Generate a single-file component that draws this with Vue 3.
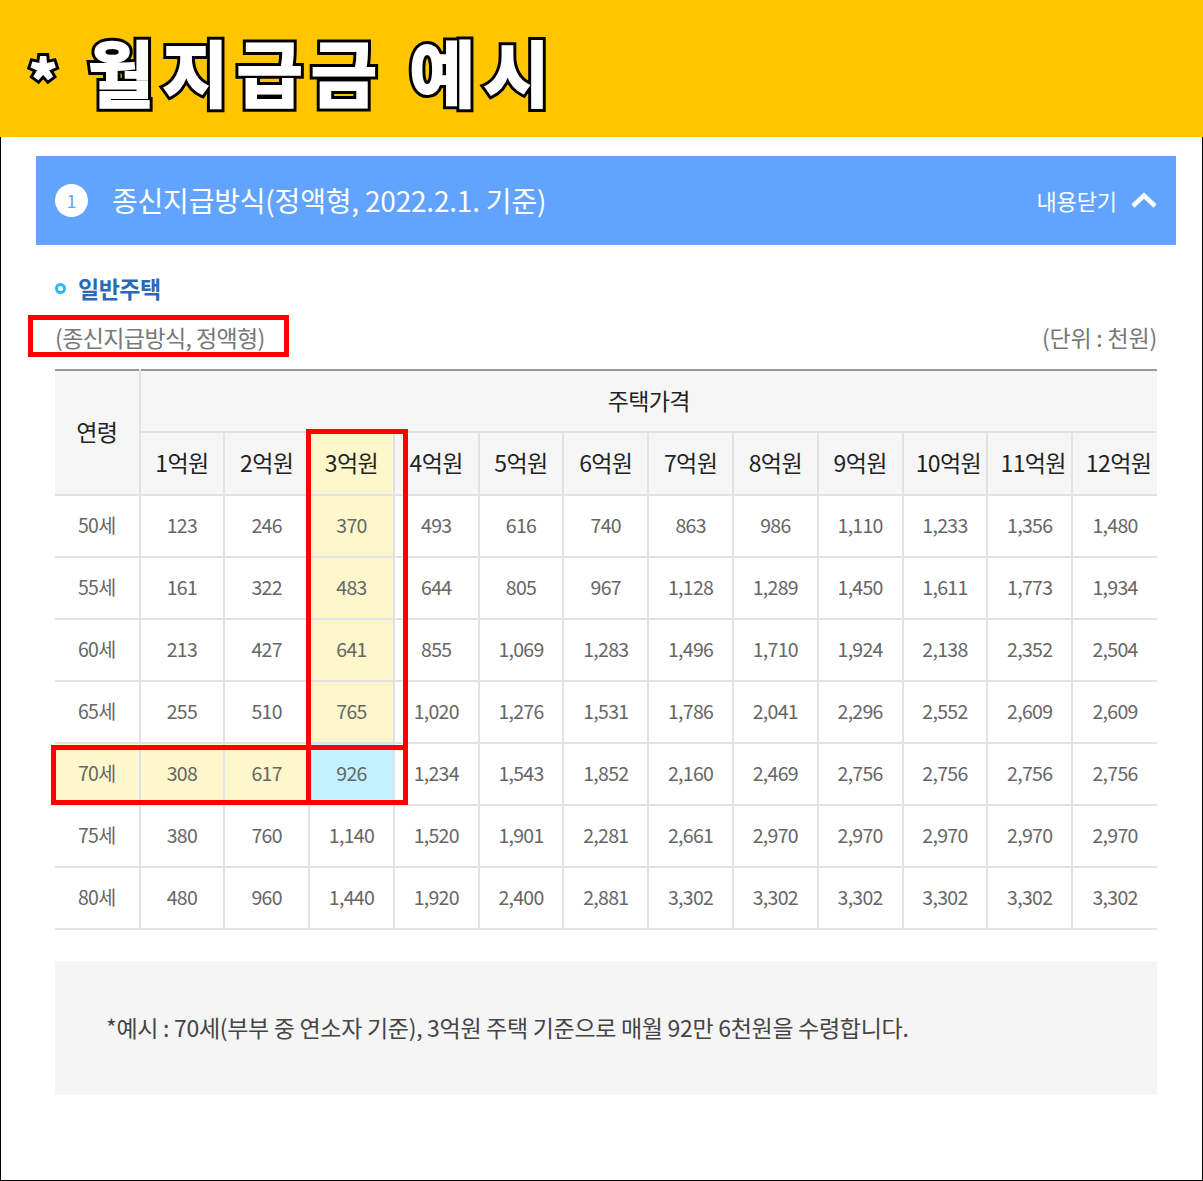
<script setup>
const title = '월지급금 예시'
const prices = ['1억원','2억원','3억원','4억원','5억원','6억원','7억원','8억원','9억원','10억원','11억원','12억원']
const rows = [
  ['50세','123','246','370','493','616','740','863','986','1,110','1,233','1,356','1,480'],
  ['55세','161','322','483','644','805','967','1,128','1,289','1,450','1,611','1,773','1,934'],
  ['60세','213','427','641','855','1,069','1,283','1,496','1,710','1,924','2,138','2,352','2,504'],
  ['65세','255','510','765','1,020','1,276','1,531','1,786','2,041','2,296','2,552','2,609','2,609'],
  ['70세','308','617','926','1,234','1,543','1,852','2,160','2,469','2,756','2,756','2,756','2,756'],
  ['75세','380','760','1,140','1,520','1,901','2,281','2,661','2,970','2,970','2,970','2,970','2,970'],
  ['80세','480','960','1,440','1,920','2,400','2,881','3,302','3,302','3,302','3,302','3,302','3,302']
]
function cellClass(r, c) {
  if (r === 4 && c === 3) return 'blue'
  if ((r === 4 && c < 3) || (r < 4 && c === 3)) return 'yellow'
  return ''
}
</script>

<template>
  <div class="page">
    <header class="banner">
      <span class="star" data-text="*">*</span>
      <h1 :data-text="title">{{ title }}</h1>
    </header>
    <main class="sheet">
      <section class="bar">
        <div class="bar-left">
          <span class="num">1</span>
          <h2>종신지급방식(정액형, 2022.2.1. 기준)</h2>
        </div>
        <div class="bar-right">
          <span>내용닫기</span>
          <svg width="28" height="18" viewBox="0 0 28 18"><path d="M3 15 L14 4.500 L25 15" fill="none" stroke="#fff" stroke-width="4.500" /></svg>
        </div>
      </section>
      <div class="content">
        <h3><i class="dot"></i>일반주택</h3>
        <div class="caption"><span>(종신지급방식, 정액형)</span><span class="unit">(단위 : 천원)</span></div>
        <table>
          <colgroup>
            <col class="c0" />
            <col v-for="p in prices" :key="p" />
          </colgroup>
          <thead>
            <tr class="h1">
              <th rowspan="2" class="age-h">연령</th>
              <th colspan="12" class="house">주택가격</th>
            </tr>
            <tr class="h2">
              <th v-for="(p, i) in prices" :key="p" :class="{ yellow: i === 2, wide: i >= 9 }">{{ p }}</th>
            </tr>
          </thead>
          <tbody>
            <tr v-for="(row, r) in rows" :key="r">
              <td v-for="(v, c) in row" :key="c" :class="cellClass(r, c)">{{ v }}</td>
            </tr>
          </tbody>
        </table>
        <div class="note">*예시 : 70세(부부 중 연소자 기준), 3억원 주택 기준으로 매월 92만 6천원을 수령합니다.</div>
      </div>
    </main>
    <div class="mark m1"></div>
    <div class="mark m2"></div>
    <div class="mark m3"></div>
    <div class="mark m4"></div>
  </div>
</template>

<style scoped>
.page {
  position: relative;
  width: 1203px;
  height: 1181px;
  overflow: hidden;
  background: #fff;
  font-family: "Noto Sans CJK KR", "Noto Sans", sans-serif;
  color: #666;
}
.banner {
  height: 137px;
  background: #ffc600;
  display: flex;
  align-items: center;
  box-sizing: border-box;
  padding-left: 29px;
}
.banner h1, .star {
  position: relative;
  margin: 0;
  line-height: 1;
  font-weight: 700;
  color: #000;
  white-space: nowrap;
  -webkit-text-stroke: 8px #000;
}
.banner h1::after, .star::after {
  content: attr(data-text);
  position: absolute;
  left: 0;
  top: 0;
  color: #fff;
  -webkit-text-stroke: 2px #fff;
}
.banner h1 {
  margin-left: 29px;
  font-size: 72px;
  letter-spacing: 8px;
  margin-top: 2px;
}
.star {
  font-size: 56px;
  margin-top: 18px;
  width: 30px;
}
.sheet {
  height: 1044px;
  box-sizing: border-box;
  border: 1px solid #000;
  border-top: 0;
  padding: 19px 26px 0 35px;
}
.bar {
  height: 89px;
  background: #61a3ff;
  display: flex;
  align-items: center;
  justify-content: space-between;
  padding: 0 18px 1px 19px;
  box-sizing: border-box;
  color: #fff;
}
.bar-left { display: flex; align-items: center; gap: 24px; }
.num {
  width: 33px;
  height: 33px;
  border-radius: 50%;
  background: #fff;
  color: #61a3ff;
  font-size: 18px;
  display: flex;
  align-items: center;
  justify-content: center;
}
.bar h2 { margin: 0; font-size: 28px; font-weight: 400; letter-spacing: -0.2px; line-height: 1; }
.bar-right { display: flex; align-items: center; gap: 13px; font-size: 22px; letter-spacing: -0.1px; }
.content { padding: 0 19px; }
h3 {
  margin: 26px 0 0;
  height: 34px;
  display: flex;
  align-items: center;
  gap: 12px;
  font-size: 23px;
  font-weight: 700;
  color: #2a68b8;
  letter-spacing: -0.5px;
}
.dot {
  width: 11px;
  height: 11px;
  box-sizing: border-box;
  border: 3.500px solid #2fb7f2;
  border-radius: 50%;
}
.caption {
  display: flex;
  justify-content: space-between;
  font-size: 23px;
  line-height: 34px;
  height: 34px;
  margin: 15px 0 15px;
  color: #777;
  letter-spacing: -0.6px;
}
.unit { letter-spacing: -0.2px; }
table {
  width: 1102px;
  table-layout: fixed;
  border-collapse: collapse;
  border-top: 2px solid #999;
}
.c0 { width: 84.500px; }
th, td {
  border: 2px solid #e2e2e6;
  padding: 0;
  text-align: center;
  box-sizing: border-box;
  overflow: hidden;
  white-space: nowrap;
}
th:first-child, td:first-child { border-left: 0; }
th:last-child, td:last-child { border-right: 0; }
thead tr:first-child th { border-top: 0; }
th {
  background: #f6f6f6;
  font-weight: 400;
  font-size: 23px;
  color: #222;
  letter-spacing: -0.6px;
}
.h1 th { height: 62px; }
.h2 th { height: 63px; padding-bottom: 3px; }
th.wide { padding-left: 7px; }
.age-h { padding-bottom: 3px; }
.house { padding-bottom: 2px; }
td {
  height: 62px;
  padding-bottom: 3px;
  font-size: 19.500px;
  letter-spacing: -0.7px;
  color: #666;
}
th.yellow, td.yellow { background: #fff7cc; }
.blue { background: #c2f2ff; }
.note {
  margin-top: 31px;
  height: 134px;
  box-sizing: border-box;
  background: #f5f5f5;
  padding: 0 0 3px 51px;
  display: flex;
  align-items: center;
  font-size: 23px;
  letter-spacing: -0.3px;
  color: #444;
}
.mark { position: absolute; border: 5px solid #f00; box-sizing: border-box; }
.m1 { left: 28px; top: 315px; width: 261px; height: 42px; }
.m2 { left: 306px; top: 429px; width: 102px; height: 321px; }
.m3 { left: 51px; top: 745px; width: 260px; height: 60px; }
.m4 { left: 306px; top: 745px; width: 102px; height: 60px; }
</style>
